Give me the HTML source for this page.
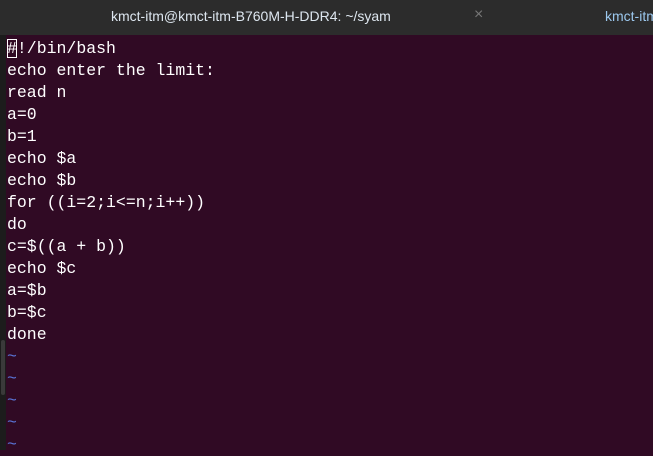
<html><head><style>
body{margin:0;width:653px;height:450px;overflow:hidden;background:#300a24;position:relative;font-family:"Liberation Mono",monospace}
.bar{position:absolute;left:0;top:0;width:653px;height:35px;background:#2c2c2c;overflow:hidden}
.t{position:absolute;top:8px;font-family:"Liberation Sans",sans-serif;font-size:14px;color:#dde6ef;white-space:nowrap}
.strip{position:absolute;left:0;top:0;width:6px;height:450px;background:#1c1c1c}
.code{position:absolute;left:7px;top:38px;font-size:16.5px;line-height:22px;color:#fff;white-space:pre;margin:0;font-family:"Liberation Mono",monospace}
.tl{color:#5a74d6}
.cur{outline:1px solid #fff;outline-offset:-1px}
</style></head><body>
<div class="strip"></div>
<div class="bar">
<div class="t" style="left:111px">kmct-itm@kmct-itm-B760M-H-DDR4: ~/syam</div>
<div class="t" style="left:474px;color:#777;font-size:16px;top:6px">×</div>
<div class="t" style="left:605px;color:#9cc8ee">kmct-itm</div>
</div>
<div style="position:absolute;left:1px;top:340px;width:4px;height:55px;background:#3a3a3a;border-radius:2px"></div>
<pre class="code"><span class="cur">#</span>!/bin/bash
echo enter the limit:
read n
a=0
b=1
echo $a
echo $b
for ((i=2;i&lt;=n;i++))
do
c=$((a + b))
echo $c
a=$b
b=$c
done
<span class="tl">~
~
~
~
~</span></pre>
</body></html>
